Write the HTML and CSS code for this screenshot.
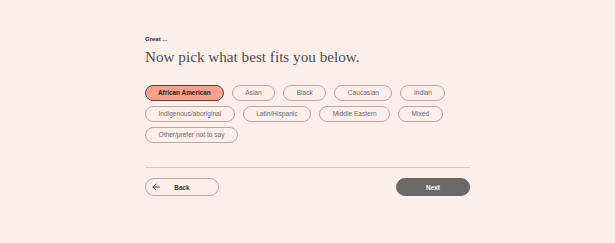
FILE: index.html
```html
<!DOCTYPE html>
<html lang="en">
<head>
<meta charset="utf-8">
<title>Ethnicity</title>
<link rel="stylesheet" href="styles.css">
</head>
<body>
<main class="page">
  <p class="eyebrow">Great ...</p>
  <h1 class="title">Now pick what best fits you below.</h1>
  <div class="options">
    <button class="pill pill-selected">African American</button>
    <button class="pill">Asian</button>
    <button class="pill">Black</button>
    <button class="pill">Caucasian</button>
    <button class="pill">Indian</button>
    <button class="pill">Indigenous/aboriginal</button>
    <button class="pill">Latin/Hispanic</button>
    <button class="pill">Middle Eastern</button>
    <button class="pill">Mixed</button>
    <button class="pill">Other/prefer not to say</button>
  </div>
  <hr class="divider">
  <div class="actions">
    <button class="btn btn-back">
      <svg class="arrow" viewBox="0 0 8 8" width="8" height="8" aria-hidden="true">
        <path d="M7.5 4H1M4 1L1 4l3 3" fill="none" stroke="#3a3330" stroke-width="0.9" stroke-linecap="round" stroke-linejoin="round"/>
      </svg>
      <span class="btn-label">Back</span>
    </button>
    <button class="btn btn-next">Next</button>
  </div>
</main>
</body>
</html>
```

FILE: styles.css
```css
html, body {
  margin: 0;
  padding: 0;
}
body {
  background: #fdf0eb;
  font-family: "Liberation Sans", Arial, sans-serif;
  color: #3a3330;
}
.page {
  width: 325px;
  margin: 0 auto;
  padding-top: 35px;
  box-sizing: border-box;
}
.eyebrow {
  margin: 0;
  font-size: 6px;
  line-height: 8px;
  font-weight: 700;
  color: #2f2a28;
}
.title {
  margin: 5px 0 0;
  font-family: "Liberation Serif", "Times New Roman", serif;
  font-weight: 400;
  font-size: 15.2px;
  line-height: 18px;
  color: #514c4a;
}
.options {
  margin-top: 19px;
  display: flex;
  flex-wrap: wrap;
  gap: 5px 8px;
}
.pill {
  height: 16px;
  box-sizing: border-box;
  padding: 0 12.5px;
  border: 1px solid #b7aaa5;
  border-radius: 8px;
  background: transparent;
  font-family: "Liberation Sans", Arial, sans-serif;
  font-size: 6.6px;
  line-height: 14px;
  color: #6f6764;
  cursor: pointer;
}
.pill-selected {
  padding: 0 12px;
  font-size: 6.4px;
  background: #f5a28c;
  border-color: #5b3f37;
  color: #2a1d19;
  font-weight: 700;
}
.divider {
  margin: 24px 0 0;
  border: 0;
  border-top: 1px solid #d7c9c4;
  height: 0;
}
.actions {
  margin-top: 10px;
  display: flex;
  justify-content: space-between;
  align-items: center;
}
.btn {
  width: 74px;
  height: 18px;
  box-sizing: border-box;
  border-radius: 9px;
  font-family: "Liberation Sans", Arial, sans-serif;
  font-size: 6.4px;
  font-weight: 700;
  cursor: pointer;
  padding: 0;
}
.btn-back {
  display: flex;
  align-items: center;
  background: transparent;
  border: 1px solid #b7aaa5;
  color: #3a3330;
  padding-left: 6px;
}
.arrow {
  display: block;
  flex: none;
}
.btn-label {
  flex: 1;
  text-align: center;
  margin-right: 14px;
}
.btn-next {
  background: #6a6968;
  border: 1px solid #6a6968;
  color: #ffffff;
}
```
